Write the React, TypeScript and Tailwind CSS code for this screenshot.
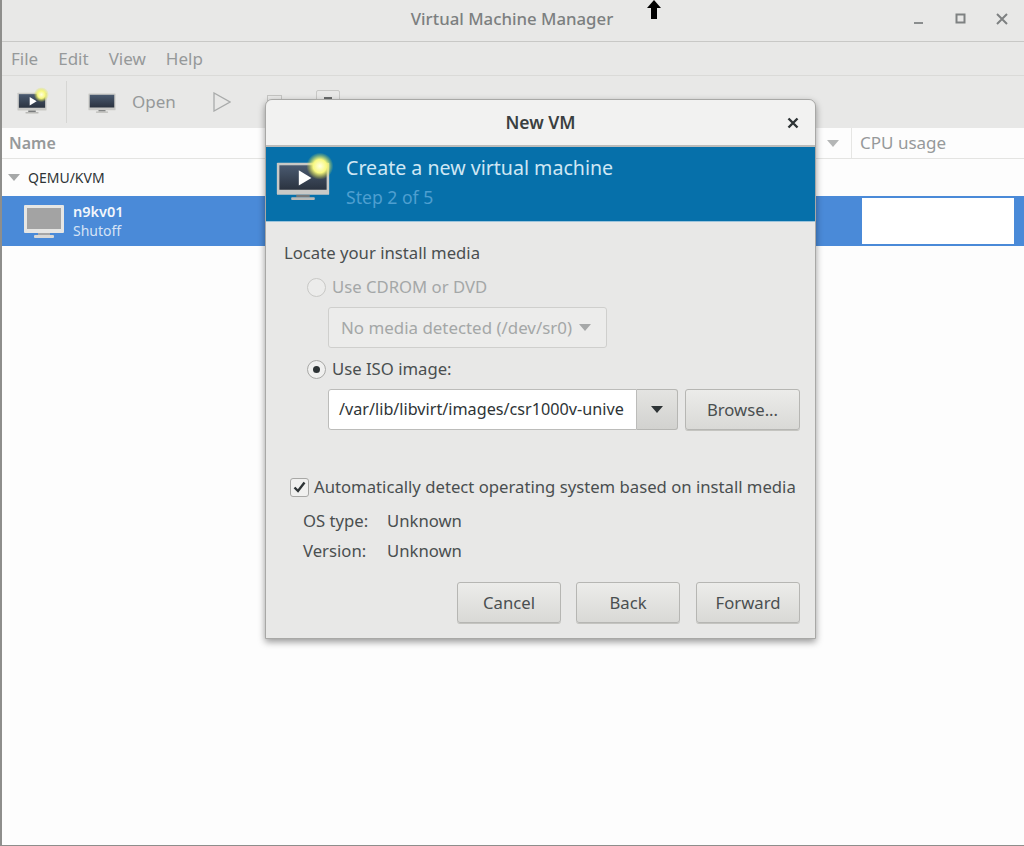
const font = { fontFamily: '"Noto Sans", sans-serif' };

function Monitor({ id, w = 36, play = false, star = false }: { id: string; w?: number; play?: boolean; star?: boolean }) {
  return (
    <svg width={w} height={w * 0.875} viewBox="0 0 64 56" fill="none" className="overflow-visible shrink-0">
      <defs>
        <linearGradient id={`${id}s`} x1="0" y1="0" x2="0" y2="1">
          <stop offset="0" stopColor="#4a5a70" />
          <stop offset="1" stopColor="#2b3340" />
        </linearGradient>
        <radialGradient id={`${id}g`}>
          <stop offset="0" stopColor="#ffffe0" />
          <stop offset="0.5" stopColor="#f8f880" />
          <stop offset="1" stopColor="#d8e040" stopOpacity="0" />
        </radialGradient>
      </defs>
      <rect x="1" y="8" width="62" height="38" rx="1" fill="#c9c9c6" />
      <rect x="4" y="11" width="56" height="29" fill={`url(#${id}s)`} />
      <rect x="24" y="46" width="16" height="3" fill="#77797a" />
      <rect x="18" y="49" width="28" height="3" rx="1" fill="#b9b9b6" />
      {play && <path d="M27 17 L27 35 L42 26 Z" fill="#fff" />}
      {star && <circle cx="52" cy="12" r="16" fill={`url(#${id}g)`} />}
    </svg>
  );
}

function GuestMonitor() {
  return (
    <svg width="40" height="33" viewBox="0 0 40 33" className="shrink-0">
      <rect x="0" y="0" width="40" height="28" rx="1" fill="#e6e6e4" />
      <rect x="3" y="3" width="34" height="21" fill="#a3a3a3" />
      <rect x="14" y="28" width="12" height="2" fill="#a6a6a6" />
      <rect x="10" y="30" width="20" height="3" rx="1" fill="#d8d8d6" />
    </svg>
  );
}

function Btn({ label, w }: { label: string; w: string }) {
  return (
    <div className={`${w} h-[41px] shrink-0 flex items-center justify-center rounded-[3px] border border-[#b6b6b3] bg-gradient-to-b from-[#ececea] to-[#d9d9d6] shadow-[0_1px_0_#c4c4c0] text-[16.7px] text-[#4a4f50]`}>
      {label}
    </div>
  );
}

export default function App() {
  return (
    <div className="relative w-[1024px] h-[846px] overflow-hidden bg-[#fdfdfd] text-[#4a4f50]" style={font}>
      <div className="h-[42px] bg-[#e8e8e7] border-b border-[#c8c8c6] relative flex items-center justify-center">
        <span className="text-[16.8px] font-medium text-[#7c7f80] -mt-[3px]">Virtual Machine Manager</span>
        <div className="absolute left-[644px] top-0">
          <svg width="20" height="20" viewBox="0 0 20 20"><path d="M10 0 L17 8 L13 8 L13 19 L7 19 L7 8 L3 8 Z" fill="#000" /></svg>
        </div>
        <div className="absolute right-[16px] top-[13px] flex items-center gap-[29.5px]">
          <svg width="12" height="12" viewBox="0 0 12 12"><rect x="1" y="9" width="9" height="2" fill="#8a8d8e" /></svg>
          <svg width="12" height="12" viewBox="0 0 12 12"><rect x="1.5" y="1.5" width="8" height="8" fill="none" stroke="#7e8182" strokeWidth="2" /></svg>
          <svg width="12" height="12" viewBox="0 0 12 12"><path d="M1 1 L11 11 M11 1 L1 11" stroke="#7e8182" strokeWidth="2" /></svg>
        </div>
      </div>
      <div className="h-[34px] bg-[#e8e8e7] border-b border-[#dadad8] flex items-center pl-[11px] gap-[20px] text-[17px] text-[#96999a]">
        <span>File</span>
        <span>Edit</span>
        <span>View</span>
        <span>Help</span>
      </div>
      <div className="h-[52px] bg-[#e8e8e7] flex items-center pl-[17px]">
        <Monitor id="a" w={30} play star />
        <div className="w-px h-[42px] bg-[#d6d6d4] ml-[19px] mr-[21px]" />
        <Monitor id="b" w={28} />
        <span className="ml-[16px] text-[17px] text-[#96999a]">Open</span>
        <svg className="ml-[37px]" width="18" height="20" viewBox="0 0 18 20"><path d="M1 1 L1 19 L17 10 Z" fill="none" stroke="#a9abab" strokeWidth="1.3" /></svg>
        <div className="ml-[36px] w-[15px] h-[15px] border border-[#c4c4c2]" />
        <div className="ml-[34px] w-[24px] h-[24px] rounded-[2px] border border-[#c8c8c6] flex items-start justify-center pt-[6px]">
          <div className="w-[8px] h-[8px] bg-[#6a6c6c]" />
        </div>
      </div>
      <div className="h-[31px] border-b border-[#e4e4e2] flex items-center text-[16px] font-semibold text-[#96999a]">
        <div className="pl-[9px] pr-[12px] w-[851px] flex items-center justify-between">
          <span>Name</span>
          <svg width="12" height="7" viewBox="0 0 12 7"><path d="M0 0 L12 0 L6 7 Z" fill="#b4b6b6" /></svg>
        </div>
        <span className="pl-[8px] h-full flex items-center border-l border-[#e6e6e4] font-normal text-[17px]">CPU usage</span>
      </div>
      <div className="h-[37px] flex items-center pl-[8px] gap-[8px] text-[14px] text-[#2e3436]">
        <svg width="12" height="7" viewBox="0 0 12 7"><path d="M0 0 L12 0 L6 7 Z" fill="#a6a8a8" /></svg>
        <span>QEMU/KVM</span>
      </div>
      <div className="h-[50px] bg-[#4a8ad8] flex items-center pl-[24px] relative">
        <GuestMonitor />
        <div className="ml-[9px] text-[#f2f6fb] leading-[19px]">
          <div className="text-[14.5px] font-semibold">n9kv01</div>
          <div className="text-[14px] text-[#d5e3f5]">Shutoff</div>
        </div>
        <div className="absolute left-[862px] top-[2px] w-[152px] h-[46px] bg-white" />
      </div>

      <div className="absolute left-[265px] top-[99px] w-[551px] h-[540px] flex flex-col rounded-t-[7px] bg-[#e8e8e7] border border-[#a8a8a6] shadow-[0_3px_7px_rgba(0,0,0,0.4)]">
        <div className="h-[47px] shrink-0 rounded-t-[7px] bg-[#f2f2f1] border-b-2 border-[#bcbcba] relative flex items-center justify-center text-[17.5px] font-semibold text-[#3a3f40]">
          New VM
          <svg className="absolute right-[16px] top-[17px]" width="12" height="12" viewBox="0 0 12 12"><path d="M1.5 1.5 L10.5 10.5 M10.5 1.5 L1.5 10.5" stroke="#2e3436" strokeWidth="2.4" /></svg>
        </div>
        <div className="h-[75px] shrink-0 bg-[#0670aa] border-b border-[#9cc4dc] flex items-center pl-[10px]">
          <div className="-mt-[8px]"><Monitor id="c" w={54} play star /></div>
          <div className="ml-[16px]">
            <div className="text-[19.6px] leading-[26px] -mt-[2px] text-[#cfe7f4]">Create a new virtual machine</div>
            <div className="text-[17.6px] leading-[28px] mt-[2px] text-[#4e9fd0]">Step 2 of 5</div>
          </div>
        </div>
        <div className="flex-1 px-[18px] pt-[19px] text-[16.7px]">
          <div className="leading-[24px]">Locate your install media</div>
          <div className="mt-[10px] ml-[23px] flex items-center gap-[6px] h-[24px] text-[#a4a7a7]">
            <div className="w-[19px] h-[19px] rounded-full border border-[#c8c8c6] bg-[#ececeb]" />
            Use CDROM or DVD
          </div>
          <div className="mt-[8px] ml-[44px] w-[279px] h-[41px] rounded-[3px] border border-[#cfcfcd] bg-[#ececeb] flex items-center pl-[12px] gap-[7px] text-[16.9px] text-[#a4a7a7] whitespace-nowrap">
            No media detected (/dev/sr0)
            <svg className="shrink-0" width="12" height="7" viewBox="0 0 12 7"><path d="M0 0 L12 0 L6 7 Z" fill="#a6a8a8" /></svg>
          </div>
          <div className="mt-[9px] ml-[23px] flex items-center gap-[6px] h-[24px]">
            <div className="w-[19px] h-[19px] rounded-full border border-[#a8a8a6] bg-[#f0f0ef] flex items-center justify-center">
              <div className="w-[7px] h-[7px] rounded-full bg-[#2e3436]" />
            </div>
            Use ISO image:
          </div>
          <div className="mt-[8px] ml-[44px] -mr-[3px] flex h-[41px]">
            <div className="w-[309px] shrink-0 rounded-l-[3px] border border-[#bcbcba] bg-white flex items-center pl-[10px] whitespace-nowrap text-[16.2px] text-[#2e3436]">
              /var/lib/libvirt/images/csr1000v-unive
            </div>
            <div className="w-[41px] shrink-0 rounded-r-[3px] border border-l-0 border-[#b6b6b3] bg-gradient-to-b from-[#e4e4e2] to-[#d2d2cf] flex items-center justify-center">
              <svg width="12" height="7" viewBox="0 0 12 7"><path d="M0 0 L12 0 L6 7 Z" fill="#2e3436" /></svg>
            </div>
            <div className="ml-[7px]"><Btn label="Browse..." w="w-[115px]" /></div>
          </div>
          <div className="mt-[45px] ml-[6px] flex items-center gap-[5px] h-[24px] whitespace-nowrap">
            <div className="w-[19px] h-[19px] rounded-[3px] border border-[#a8a8a6] bg-[#f0f0ef] flex items-center justify-center">
              <svg width="13" height="12" viewBox="0 0 13 12"><path d="M1.5 6.5 L5 10 L11.5 1.5" fill="none" stroke="#2e3436" strokeWidth="2.4" /></svg>
            </div>
            Automatically detect operating system based on install media
          </div>
          <div className="mt-[10px] ml-[19px] flex h-[24px] items-center"><span className="w-[84px]">OS type:</span>Unknown</div>
          <div className="mt-[6px] ml-[19px] flex h-[24px] items-center"><span className="w-[84px]">Version:</span>Unknown</div>
          <div className="mt-[19px] flex justify-end -mr-[3px]">
            <Btn label="Cancel" w="w-[104px]" />
            <div className="ml-[15px]"><Btn label="Back" w="w-[104px]" /></div>
            <div className="ml-[16px]"><Btn label="Forward" w="w-[104px]" /></div>
          </div>
        </div>
      </div>
      <div className="absolute inset-0 pointer-events-none border-l-2 border-b border-[#8e8e8c]" />
    </div>
  );
}
